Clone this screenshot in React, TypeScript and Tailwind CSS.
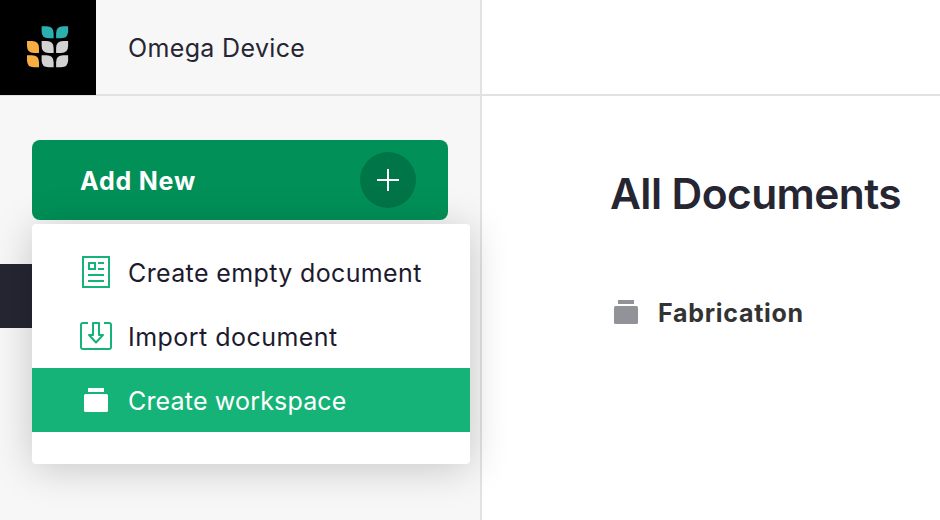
import type { ReactNode } from 'react';

function Logo() {
  const left = 'M0 0H5Q12 0 12 7V12H7Q0 12 0 5Z';
  const right = 'M12 0H7Q0 0 0 7V12H5Q12 12 12 5Z';
  return (
    <svg width="96" height="95" viewBox="0 0 96 95">
      <path d={left} fill="#2cb0af" transform="translate(41.6 26.3)" />
      <path d={right} fill="#2cb0af" transform="translate(56.1 26.3)" />
      <path d={left} fill="#f9ae41" transform="translate(27 41)" />
      <path d={left} fill="#d2d2d2" transform="translate(41.6 41)" />
      <path d={right} fill="#d2d2d2" transform="translate(56.1 41)" />
      <path d={left} fill="#f9ae41" transform="translate(27 55.2)" />
      <path d={left} fill="#d2d2d2" transform="translate(41.6 55.2)" />
      <path d={right} fill="#d2d2d2" transform="translate(56.1 55.2)" />
    </svg>
  );
}

function DocumentIcon() {
  return (
    <svg width="32" height="32" viewBox="0 0 32 32" fill="none" stroke="#16b378" strokeWidth="2">
      <path d="M3 1H29V31H3ZM9 7H15V13H9ZM18 7H24M18 13H24M8 19H24M8 25H24" />
    </svg>
  );
}

function ImportIcon() {
  return (
    <svg width="32" height="32" viewBox="0 0 32 32" fill="none" stroke="#16b378" strokeWidth="2" strokeLinejoin="round">
      <path d="M8 3H3Q1 3 1 5V27Q1 29 3 29H29Q31 29 31 27V5Q31 3 29 3H24" />
      <path d="M13 3H19V15H23L16 22.5L9 15H13Z" />
    </svg>
  );
}

function WorkspaceIcon() {
  return (
    <svg width="32" height="32" viewBox="0 0 32 32" fill="currentColor">
      <rect x="8" y="4" width="16" height="4" />
      <rect x="4" y="10" width="24" height="18" rx="1.5" />
    </svg>
  );
}

function MenuItem({ icon, active = false, children }: { icon: ReactNode; active?: boolean; children: ReactNode }) {
  return (
    <li
      className={
        active
          ? 'flex h-16 items-center gap-4 bg-[#16b378] pl-12 text-white'
          : 'flex h-16 items-center gap-4 pl-12 text-[#1e1a2e]'
      }
    >
      {icon}
      {children}
    </li>
  );
}

export default function App() {
  return (
    <div className="flex h-[520px] w-[940px] overflow-hidden bg-white font-['Inter',sans-serif] text-[25px] leading-8 text-[#262633] antialiased">
      <aside className="relative w-[482px] shrink-0 border-r-2 border-[#e2e2e2] bg-[#f7f7f7]">
        <header className="flex h-24 border-b-2 border-[#e2e2e2]">
          <div className="h-[95px] w-24 shrink-0 bg-black">
            <Logo />
          </div>
          <span className="pl-8 pt-8 tracking-[0.35px]">Omega Device</span>
        </header>
        <div className="px-8 pt-11">
          <button className="flex h-20 w-full items-center justify-between rounded-lg bg-[#009058] pl-12 pr-8 font-bold text-white">
            <span className="pt-0.5 tracking-[0.8px]">Add New</span>
            <span className="flex size-14 items-center justify-center rounded-full bg-[#007548]">
              <svg width="22" height="22" viewBox="0 0 22 22" stroke="white" strokeWidth="2">
                <path d="M11 0V22M0 11H22" />
              </svg>
            </span>
          </button>
        </div>
        <div className="mr-8 mt-11 h-16 bg-[#262633]" />
        <ul className="absolute left-8 top-56 z-10 h-60 w-[438px] rounded bg-white pt-4 shadow-[0_4px_40px_rgba(0,0,0,0.2)]">
          <MenuItem icon={<DocumentIcon />}>
            <span className="whitespace-nowrap pt-0.5 tracking-[0.37px]">Create empty document</span>
          </MenuItem>
          <MenuItem icon={<ImportIcon />}>
            <span className="whitespace-nowrap pt-0.5 tracking-[0.47px]">Import document</span>
          </MenuItem>
          <MenuItem icon={<WorkspaceIcon />} active>
            <span className="whitespace-nowrap pt-0.5 tracking-[0.17px]">Create workspace</span>
          </MenuItem>
        </ul>
      </aside>
      <main className="flex-1">
        <div className="h-24 border-b-2 border-[#e2e2e2]" />
        <div className="pl-32 pt-[72px]">
          <h1 className="whitespace-nowrap text-[42.5px] font-semibold leading-[52px] tracking-[-0.58px]">All Documents</h1>
          <div className="mt-[75px] flex items-center gap-4 font-bold text-[#333]">
            <span className="text-[#929299]">
              <WorkspaceIcon />
            </span>
            <span className="pt-0.5 tracking-[0.72px]">Fabrication</span>
          </div>
        </div>
      </main>
    </div>
  );
}
